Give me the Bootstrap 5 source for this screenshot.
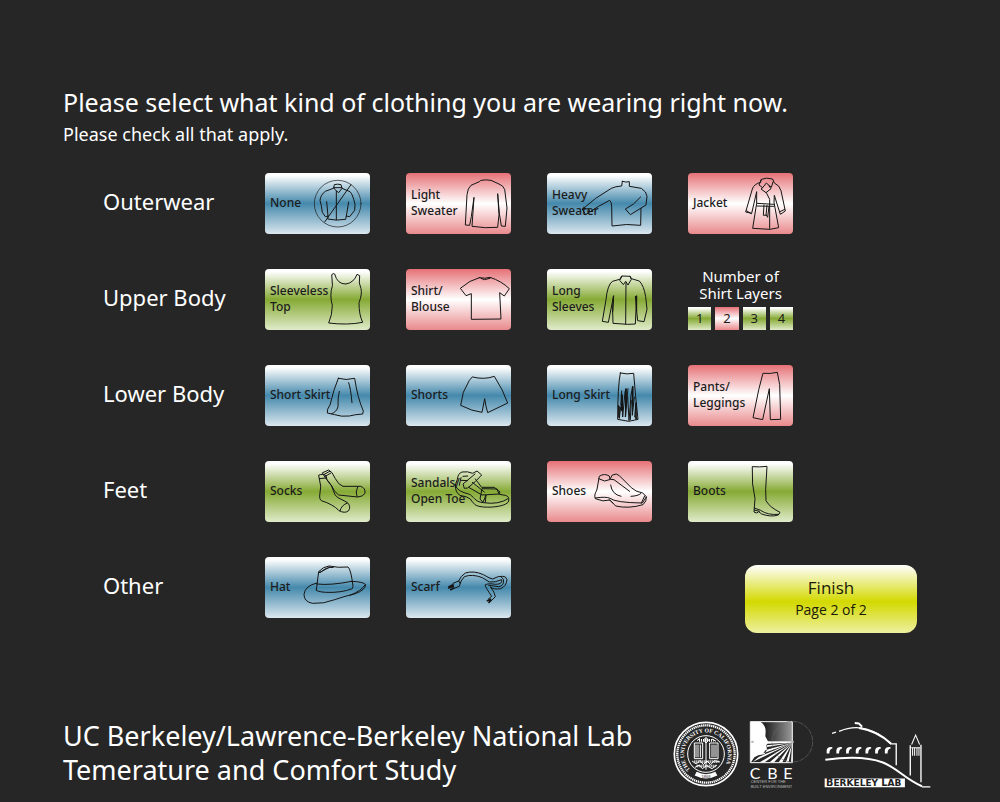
<!DOCTYPE html>
<html lang="en">
<head>
<meta charset="utf-8">
<meta name="viewport" content="width=device-width, initial-scale=1">
<title>Comfort Study</title>
<link href="https://cdn.jsdelivr.net/npm/bootstrap@5.3.0/dist/css/bootstrap.min.css" rel="stylesheet">
<style>
body{background:#262626;color:#fff;font-family:"Noto Sans",sans-serif}
.page{padding:84px 83px 12px 63px}
h1{font-size:25px;line-height:36px;font-weight:400;margin:0}
.sub{font-size:18px;line-height:28px;margin:0 0 25px}
.survey{display:grid;row-gap:35px}
.question{display:grid;grid-template-columns:162px minmax(0,528px) 1fr;min-height:61px;padding-left:40px}
.question h2{font-size:22px;line-height:56px;font-weight:400;margin:0}
.choices{display:grid;grid-template-columns:repeat(4,minmax(0,1fr));column-gap:36px}
.tile{display:flex;align-items:center;height:61px;padding:0 0 1px 5px;border-radius:4px;font-size:12px;font-weight:500;line-height:16px;color:#1c1c1c;position:relative;cursor:pointer}
.tile svg{position:absolute;right:0;top:0;width:105px;height:61px;fill:none;stroke:#151515;stroke-width:3;stroke-linejoin:round;stroke-linecap:round}
.blue{background:linear-gradient(#fff 4%,#4589ac 50%,#dbe7ef)}
.green{background:linear-gradient(#fff 4%,#86aa35 50%,#e0ebca)}
.btn-check:checked+label{background:linear-gradient(#e57176,#fff 50%,#e9898c)}
.layers{font-size:15px;line-height:17px;text-align:center;margin-top:-1px}
.layers legend{font-size:inherit;line-height:inherit;margin:0 0 5px;float:none}
.layer{flex:1;height:23px;font-size:13px;line-height:23px;color:#1c1c1c;cursor:pointer}
.finish{width:172px;height:68px;border:0;border-radius:12px;background:linear-gradient(#fff,#d3d900 54%,#eef0a0);color:#1a1a08;font-family:"Open Sans",sans-serif;line-height:22px;font-size:17px;margin-top:8px;justify-self:end}
.finish span{display:block;font-size:14px}
.question.last{grid-template-columns:162px minmax(0,246px) 1fr}
.last .choices{grid-template-columns:repeat(2,minmax(0,1fr))}
footer{margin-top:86px}
footer p{font-size:27px;line-height:34px;margin:0}
.logos{gap:10px;margin-right:-14px;margin-top:2px}
</style>
</head>
<body>
<form class="page">
<h1>Please select what kind of clothing you are wearing right now.</h1>
<p class="sub">Please check all that apply.</p>
<div class="survey">
<section class="question"><h2>Outerwear</h2><div class="choices">
<div><input class="btn-check" type="checkbox" id="none"><label class="tile blue" for="none">None
<svg viewBox="31 24 315 183"><circle cx="249" cy="116" r="70" stroke-width="2"/><path d="M289 59 210 171M236 70 212 79Q198 89 196 106Q201 123 203 142L212 155 220 153 216 110M220 153 219 162Q245 168 273 163L275 153 285 155 300 136 301 118Q294 87 286 80L262 70M275 153 282 111M245 79V164M237 68 239 59Q249 56 259 59L262 70 252 83 240 73 237 68 261 68"/></svg></label></div>
<div><input class="btn-check" type="checkbox" id="light" checked><label class="tile blue" for="light">Light<br>Sweater
<svg viewBox="452 24 315 183"><path d="M672 50 647 61Q637 69 635 89L630 180 643 181 648 155 656 97 650 184 690 188 727 187 731 149 727 86 732 145 738 183 750 184 755 129 748 73Q743 61 731 57L707 46Q691 43 677 46Z"/></svg></label></div>
<div><input class="btn-check" type="checkbox" id="heavy"><label class="tile blue" for="heavy">Heavy<br>Sweater
<svg viewBox="35 24 315 183"><path d="M261 49Q272 53 282 50V64L318 70Q334 80 335 94L332 120 285 149 270 132Q295 121 316 96M317 130 316 181Q275 175 230 183L229 124Q228 109 223 106Q190 122 151 149L141 133Q177 99 228 70Q240 64 259 63L261 49M141 133 160 131 163 140"/></svg></label></div>
<div><input class="btn-check" type="checkbox" id="jacket" checked><label class="tile blue" for="jacket">Jacket
<svg viewBox="457 24 315 183"><path d="M677 43Q691 36 711 42L716 54Q732 61 736 77L749 138 734 148 716 91 715 112 729 188 703 193 651 190 663 115 663 80 648 145 630 141 650 72Q655 57 674 52ZM676 46 670 60 681 68 692 54 707 67 712 51M681 68 676 72 691 83 706 71 700 63M692 83 702 103V190M664 115 716 118M664 123 715 124M685 120 683 151 692 150 696 157 700 124M694 121 691 151M632 137 647 146M733 140 747 133"/></svg></label></div>
</div></section>
<section class="question"><h2>Upper Body</h2><div class="choices">
<div><input class="btn-check" type="checkbox" id="sleeveless"><label class="tile green" for="sleeveless">Sleeveless<br>Top
<svg viewBox="31 28 315 183"><path d="M232 44Q236 40 240 43Q248 74 274 73Q298 69 307 44L315 48Q311 72 319 87Q323 104 313 129Q313 166 324 188Q278 197 222 190Q233 166 233 137Q224 106 233 79Z"/></svg></label></div>
<div><input class="btn-check" type="checkbox" id="shirt" checked><label class="tile green" for="shirt">Shirt/<br>Blouse
<svg viewBox="452 28 315 183"><path d="M672 54Q690 58 704 53Q738 64 762 87L747 109 733 99 737 178 648 179 648 102 632 108 615 86Q643 61 672 54ZM677 56 687 60 704 56"/></svg></label></div>
<div><input class="btn-check" type="checkbox" id="long"><label class="tile green" for="long">Long<br>Sleeves
<svg viewBox="35 28 315 183"><path d="M260 49 285 50 288 57 312 64Q326 79 331 111L335 149 326 186 307 183 304 155 304 108 300 193 277 194 233 191 232 157 235 108 219 188 201 185 212 120Q216 77 231 65L253 59ZM260 50 253 62 264 75 271 65 278 76 288 59 284 50M272 69 271 193M232 156 234 110M304 154 300 110"/></svg></label></div>
<fieldset class="layers"><legend>Number of<br>Shirt Layers</legend><div class="d-flex gap-1">
<input class="btn-check" type="radio" name="layers" id="l1"><label class="layer green" for="l1">1</label>
<input class="btn-check" type="radio" name="layers" id="l2" checked><label class="layer green" for="l2">2</label>
<input class="btn-check" type="radio" name="layers" id="l3"><label class="layer green" for="l3">3</label>
<input class="btn-check" type="radio" name="layers" id="l4"><label class="layer green" for="l4">4</label></div></fieldset>
</div></section>
<section class="question"><h2>Lower Body</h2><div class="choices">
<div><input class="btn-check" type="checkbox" id="sskirt"><label class="tile blue" for="sskirt">Short Skirt
<svg viewBox="31 24 315 183"><path d="M251 64Q274 71 300 64Q309 124 326 162L324 171Q303 172 284 177Q260 180 240 173L218 168Q216 157 226 144Q237 96 251 64ZM282 77Q288 94 292 137M254 103Q249 120 250 149Q246 165 231 170"/></svg></label></div>
<div><input class="btn-check" type="checkbox" id="shorts"><label class="tile blue" for="shorts">Shorts
<svg viewBox="452 24 315 183"><path d="M652 60Q686 69 717 58Q744 100 757 138L697 167Q691 147 688 125L680 166Q651 163 616 145L624 106 641 72Z"/></svg></label></div>
<div><input class="btn-check" type="checkbox" id="lskirt"><label class="tile blue" for="lskirt">Long Skirt
<svg viewBox="35 24 315 183"><path d="M255 48Q275 53 295 49Q300 115 308 187L280 193 247 187Q247 89 255 48ZM259 102 257 145 261 115 262 180 269 105 272 95 270 180 278 95M277 120 281 191 287 115 292 88 291 175 297 120M302 137 298 180 306 186M249 145 252 184 256 150M271 177 272 115M288 131 285 188"/><path stroke-width="5" d="M272 97V150M292 90V137M259 112V160M302 140V185M251 149V180"/></svg></label></div>
<div><input class="btn-check" type="checkbox" id="pants" checked><label class="tile blue" for="pants">Pants/<br>Leggings
<svg viewBox="457 24 315 183"><path d="M683 49Q704 51 725 46L732 83 735 187 704 188 701 95 681 188 652 182 669 99Z"/></svg></label></div>
</div></section>
<section class="question"><h2>Feet</h2><div class="choices">
<div><input class="btn-check" type="checkbox" id="socks"><label class="tile green" for="socks">Socks
<svg viewBox="31 25 315 183"><path d="M193 67Q206 62 214 69Q215 82 224 91Q232 98 236 114Q240 130 250 135L277 149Q290 160 282 174Q270 184 252 173Q235 155 200 144Q194 140 195 130L198 102ZM194 78 214 76M204 60 222 52 232 60 242 78Q252 97 265 101L318 101Q333 106 331 122Q325 132 309 133L252 127Q239 119 230 98L214 78ZM207 66 225 56M211 71 229 61M256 175Q260 157 278 151M307 132Q301 119 309 102"/></svg></label></div>
<div><input class="btn-check" type="checkbox" id="sandals"><label class="tile green" for="sandals">Sandals/<br>Open Toe
<svg viewBox="452 25 315 183"><path d="M600 97 606 80Q608 62 620 58Q637 55 652 62L665 55 679 67Q664 85 637 106L627 107 623 94 659 64M660 79 679 104 717 104 734 118 732 125 750 128Q763 131 760 145C755 165 675 169 659 156Q650 147 645 139Q635 131 614 128Q599 119 600 97M602 103Q610 117 640 124C655 129 657 148 684 150Q730 157 758 138M623 71 637 70M618 83 637 84M612 98 617 75M640 104 680 127 731 124 725 109 680 108 674 139 683 149 692 127 690 149M651 89 687 118"/></svg></label></div>
<div><input class="btn-check" type="checkbox" id="shoes" checked><label class="tile green" for="shoes">Shoes
<svg viewBox="35 25 315 183"><path d="M193 70Q207 61 222 70L224 80 231 67Q244 60 252 69L288 105Q300 117 322 121L333 132Q335 145 323 156Q280 169 241 160L224 142Q203 149 180 138Q175 128 184 113ZM190 78 208 85 226 80 236 81 283 116M226 97Q229 125 257 131M180 136Q213 131 224 137Q240 150 321 151L333 133M287 131Q308 130 316 123M222 141 233 152M318 151 328 130"/></svg></label></div>
<div><input class="btn-check" type="checkbox" id="boots"><label class="tile green" for="boots">Boots
<svg viewBox="457 25 315 183"><path d="M651 42Q672 44 694 41L690 110 691 144Q701 163 733 179L728 187Q706 194 678 184L669 177 663 181 655 178 658 138 651 95ZM656 166 675 173Q696 188 728 185M656 172 671 176"/></svg></label></div>
</div></section>
<section class="question last"><h2>Other</h2><div class="choices">
<div><input class="btn-check" type="checkbox" id="hat"><label class="tile blue" for="hat">Hat
<svg viewBox="31 24 315 183" stroke-width="2"><path d="M185 123 192 68Q205 53 223 51Q250 57 280 54Q289 61 295 112L293 119Q259 132 213 130Q184 128 185 123ZM186 105Q227 110 291 97M187 102Q151 110 148 136Q148 159 174 163Q207 165 240 152Q265 143 302 134Q332 123 333 107Q326 98 290 97M193 71Q218 59 225 54M193 69 199 70Q211 54 236 55M286 139Q321 125 331 108"/></svg></label></div>
<div><input class="btn-check" type="checkbox" id="scarf"><label class="tile blue" for="scarf">Scarf
<svg viewBox="452 24 315 183"><path d="M593 103 610 96Q616 81 630 72Q656 64 684 77Q704 89 712 90Q730 80 742 82Q752 81 755 92Q753 112 736 119Q714 123 705 113Q719 131 720 143L707 156 699 150 709 142Q693 119 689 108Q698 102 720 106Q742 106 739 92Q719 101 702 99L681 86Q650 74 627 83Q615 95 612 112L594 119M610 96 614 103M738 84 744 91Q748 110 730 113L700 109"/><path stroke-width="5" d="M593 107 581 113M594 112 580 117M595 117 586 122M706 151 696 155M706 155 701 160"/></svg></label></div>
</div><button class="finish" type="button">Finish<span>Page 2 of 2</span></button></section>
</div>
<footer class="d-flex justify-content-between">
<p>UC Berkeley/Lawrence-Berkeley National Lab<br>Temerature and Comfort Study</p>
<div class="logos d-flex flex-shrink-0">
<svg width="66" height="66" viewBox="20 26 198 198" fill="none" stroke="#fff"><circle cx="119" cy="125" r="95" stroke-width="5"/><circle cx="119" cy="125" r="86" stroke-width="7" stroke-dasharray="4 2"/><circle cx="119" cy="125" r="55" stroke-width="3"/><path id="ring" stroke="none" d="M72 172A66 66 0 1 1 166 172"/><text fill="#fff" stroke="none" font-family="Liberation Serif,serif" font-weight="700" font-size="17"><textPath href="#ring">THE UNIVERSITY OF CALIFORNIA</textPath></text><path stroke-width="3" d="M84 92H109V139H84ZM130 92H155V139H130ZM89 97V135M95 97V135M102 97V135M137 97V135M143 97V135M149 97V135M119 77V172M112 83 119 75 127 84 119 92ZM77 146 90 155 101 144 111 157 122 146 133 157 144 145 161 149M86 165 99 158 108 169 121 160 137 169 152 158M92 85 101 78M137 80 149 87"/><path stroke-width="8" stroke-dasharray="3 3" d="M84 148H157M91 161H149M98 84H142"/><path stroke-width="13" d="M88 184Q119 200 150 184"/><text x="119" y="196" text-anchor="middle" fill="#262626" stroke="none" font-family="Liberation Sans,sans-serif" font-size="12">1868</text></svg>
<svg width="65" height="67" viewBox="252 26 195 201" fill="none" stroke="#fff"><defs><linearGradient id="shade"><stop stop-color="#222"/><stop offset="1" stop-color="#999"/></linearGradient></defs><path fill="url(#shade)" stroke="none" d="M300 29H381V87H306Z"/><path stroke-width="3" d="M256 28H382V151H256Z"/><path fill="#fff" stroke="none" d="M257 29H287Q302 39 302 57L301 72 311 91 304 98 306 112 299 125 280 129 268 135 257 151ZM306 87H382V91L306 94ZM382 91 306 99V104ZM382 91 302 113 295 123ZM382 91 281 134 263 149ZM382 91 284 150H299ZM382 91 314 150H327ZM382 91 341 150H352ZM382 91 363 150H371ZM382 91 378 150H382Z"/><circle cx="382" cy="88" r="61" stroke="#666" stroke-width="2" stroke-dasharray="16 3"/><path fill="#bbb" stroke="none" d="M259 85H266V92H259ZM378 85H386V92H378Z"/><g fill="#fff" stroke="none" font-family="Lato,sans-serif"><text x="254" y="199" font-size="48">C</text><text x="307" y="199" font-size="48">B</text><text x="355" y="199" font-size="48">E</text><g font-size="12" fill="#bbb" font-family="Liberation Sans,sans-serif"><text x="257" y="213">CENTER FOR THE</text><text x="257" y="226">BUILT ENVIRONMENT</text></g></g></svg>
<svg width="107" height="67" viewBox="40 25 320 200" fill="none" stroke="#fff" stroke-width="4"><path d="M64 62 76 58M85 56Q145 30 201 64L220 76 239 93H256V157"/><path stroke-width="6" d="M132 31 144 32 154 42M145 46Q200 55 241 93M44 141Q154 126 216 149C260 166 282 198 333 220"/><path d="M333 222H358M298 97V188M330 96V208"/><path stroke-width="3" d="M302 95 314 67 326 95M305 105V129M311 105V129M318 105V129M324 105V129M301 105H328"/><g fill="#fff" stroke="none"><path id="arch" d="M48 122V112Q50 101 65 103V107Q56 108 56 122Z"/><use href="#arch" x="29"/><use href="#arch" x="58"/><use href="#arch" x="87"/><use href="#arch" x="116"/><use href="#arch" x="145"/><use href="#arch" x="174"/><path d="M42 197H282V223H42Z"/><text x="46" y="220" fill="#222" font-family="DejaVu Sans,sans-serif" font-weight="700" font-size="29">B<tspan font-size="27">ERKELEY </tspan>L<tspan font-size="27">AB</tspan></text></g></svg>
</div></footer>
</form>
<script src="https://cdn.jsdelivr.net/npm/bootstrap@5.3.0/dist/js/bootstrap.bundle.min.js"></script>
</body>
</html>
